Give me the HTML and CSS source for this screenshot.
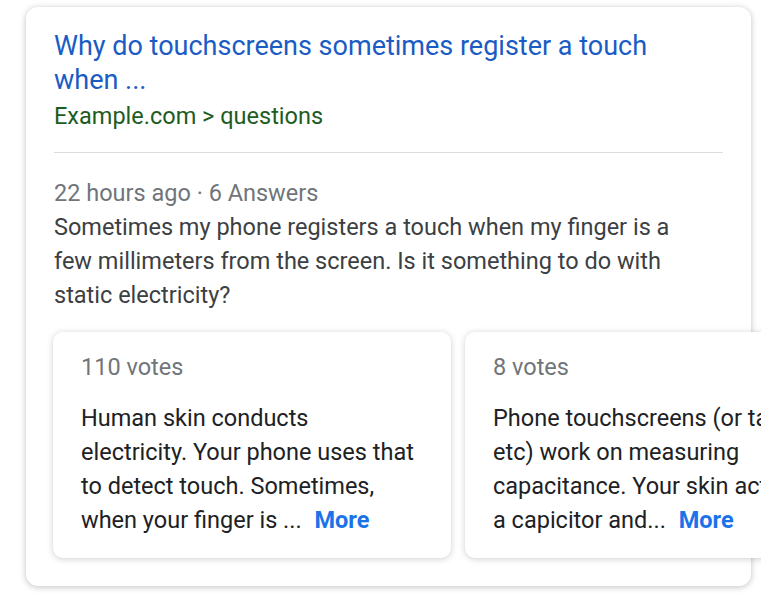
FILE: index.html
```html
<!DOCTYPE html>
<html>
<head>
<meta charset="utf-8">
<link rel="stylesheet" href="styles.css">
</head>
<body>
<div class="page">
  <div class="result">
    <a class="title" href="#">Why do touchscreens sometimes register a touch when ...</a>
    <div class="crumb">Example.com &gt; questions</div>
    <div class="divider"></div>
    <div class="meta">22 hours ago · 6 Answers</div>
    <p class="question">Sometimes my phone registers a touch when my finger is a few millimeters from the screen. Is it something to do with static electricity?</p>
    <div class="answers">
      <div class="answer">
        <div class="votes">110 votes</div>
        <p class="answer-text">Human skin conducts<br>electricity. Your phone uses that<br>to detect touch. Sometimes,<br>when your finger is ... <a class="more" href="#">More</a></p>
      </div>
      <div class="answer">
        <div class="votes">8 votes</div>
        <p class="answer-text">Phone touchscreens (or tablets<br>etc) work on measuring<br>capacitance. Your skin acts as<br>a capicitor and... <a class="more" href="#">More</a></p>
      </div>
    </div>
  </div>
</div>
</body>
</html>
```
FILE: styles.css
```css
html, body {
  margin: 0;
  padding: 0;
  background: #fff;
}
body {
  font-family: Roboto, Arial, sans-serif;
  color: #202124;
}
.page {
  width: 761px;
  overflow: hidden;
  padding: 7px 0 17px 26px;
  box-sizing: border-box;
}
.result {
  width: 725px;
  box-sizing: border-box;
  background: #fff;
  border-radius: 12px;
  box-shadow: 0 1px 6px rgba(32, 33, 36, 0.28);
  padding: 22px 0 28px 28px;
}
.title {
  display: block;
  font-size: 27px;
  line-height: 34px;
  color: #1a5cc4;
  text-decoration: none;
  width: 640px;
}
.crumb {
  font-size: 23.5px;
  line-height: 34px;
  margin-top: 2px;
  color: #1e5c1e;
}
.divider {
  height: 1px;
  background: #dadce0;
  margin: 19px 28px 23px 0;
}
.meta {
  font-size: 23.5px;
  line-height: 34px;
  color: #70757a;
}
.question {
  margin: 0;
  font-size: 23.5px;
  line-height: 34px;
  color: #3c4043;
  width: 640px;
}
.answers {
  display: flex;
  gap: 14px;
  margin-top: 20px;
  margin-left: -1px;
  width: 820px;
}
.answer {
  flex: 0 0 398px;
  box-sizing: border-box;
  height: 226px;
  background: #fff;
  border-radius: 10px;
  box-shadow: 0 1px 6px rgba(32, 33, 36, 0.22);
  padding: 18px 20px 21px 28px;
}
.votes {
  font-size: 23.5px;
  line-height: 34px;
  color: #70757a;
}
.answer-text {
  margin: 17px 0 0;
  font-size: 23.5px;
  line-height: 34px;
  color: #202124;
  white-space: nowrap;
}
.more {
  color: #1a73e8;
  font-weight: bold;
  text-decoration: none;
  margin-left: 7px;
}
```
